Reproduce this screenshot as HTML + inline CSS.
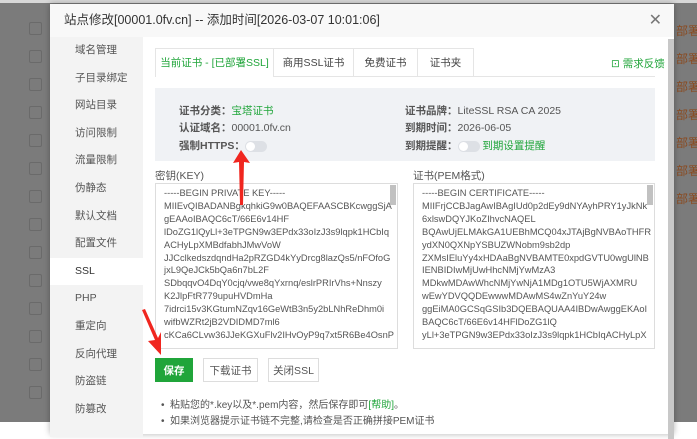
<!DOCTYPE html><html><head><meta charset="utf-8"><style>
body{margin:0;width:697px;height:422px;overflow:hidden;background:#fff;font-family:"Liberation Sans","Noto Sans CJK SC",sans-serif;position:relative}
.ov{position:absolute;left:0;top:0;width:697px;height:422px;background:#7b7b7b}
.topw{position:absolute;left:0;top:0;width:697px;height:3px;background:#d8d8d8}
.cb{position:absolute;left:29px;width:11px;height:11px;border:1px solid #6a6a6a;border-radius:2px}
.rt{position:absolute;left:676px;font-size:12px;color:#8a4a20;white-space:nowrap;width:40px}
.modal{position:absolute;left:50px;top:4px;width:624px;height:430px;background:#fff;box-shadow:0 0 6px rgba(0,0,0,.3)}
.hd{height:33px;background:#f8f8f8;font-size:12.5px;color:#333;line-height:33px;padding-left:14px}
.x{position:absolute;right:12px;top:6px;font-size:16px;color:#777;font-weight:normal}
.side{position:absolute;left:0;top:33px;width:93px;height:400px;background:#f3f3f3}
.side div{height:27.6px;line-height:27.6px;font-size:10.5px;color:#555;padding-left:25px}
.side .on{background:#fff;color:#333}
.sb{position:absolute;left:618px;top:35px;width:6px;height:400px;background:#c8c8c8}
.tabs{position:absolute;left:105px;top:44px;height:28px;border-bottom:1px solid #e5e5e5;width:500px}
.tab{position:absolute;top:0;height:28px;line-height:28px;font-size:10.5px;color:#444;text-align:center;border:1px solid #e5e5e5;border-bottom:none;box-sizing:border-box}
.info{position:absolute;left:105px;top:84px;width:500px;height:73px;background:#f0f2f5;font-size:10.5px;color:#555}
.info span.l{font-weight:bold;color:#555}
.g{color:#20a53a}
.row{position:absolute;white-space:nowrap}
.tog{display:inline-block;width:22px;height:11px;border-radius:6px;background:#dde0e5;vertical-align:middle;position:relative}
.tog:after{content:"";position:absolute;left:1px;top:1px;width:9px;height:9px;border-radius:50%;background:#fff}
.lab{position:absolute;font-size:10.5px;color:#555}
.ta{position:absolute;border:1px solid #ddd;font-size:9.3px;line-height:12.9px;color:#555;padding:3px 8px;box-sizing:border-box;overflow:hidden;white-space:nowrap}
.tsb{position:absolute;top:1px;right:1px;width:6px;height:20px;background:#c1c1c1}
.btn{position:absolute;top:354px;height:24px;line-height:24px;font-size:10.5px;text-align:center;border:1px solid #ddd;color:#555;box-sizing:border-box}
.bl{position:absolute;left:111px;font-size:10px;color:#555;white-space:nowrap}
</style></head><body>
<div class="ov"></div><div class="topw"></div>
<div class="cb" style="top:22px"></div><div class="cb" style="top:50px"></div><div class="cb" style="top:78px"></div><div class="cb" style="top:106px"></div><div class="cb" style="top:134px"></div><div class="cb" style="top:162px"></div><div class="cb" style="top:190px"></div><div class="cb" style="top:218px"></div><div class="cb" style="top:246px"></div><div class="cb" style="top:274px"></div><div class="cb" style="top:302px"></div><div class="cb" style="top:330px"></div><div class="cb" style="top:358px"></div><div class="cb" style="top:386px"></div>
<div class="rt" style="top:22px">部署</div><div class="rt" style="top:50px">部署</div><div class="rt" style="top:78px">部署</div><div class="rt" style="top:106px">部署</div><div class="rt" style="top:134px">部署</div><div class="rt" style="top:162px">部署</div><div class="rt" style="top:190px">部署</div>
<div class="modal">
<div class="hd">站点修改[00001.0fv.cn] -- 添加时间[2026-03-07 10:01:06]</div>
<div class="x">✕</div>
<div class="side"><div>域名管理</div><div>子目录绑定</div><div>网站目录</div><div>访问限制</div><div>流量限制</div><div>伪静态</div><div>默认文档</div><div>配置文件</div><div class="on">SSL</div><div>PHP</div><div>重定向</div><div>反向代理</div><div>防盗链</div><div>防篡改</div></div>
<div class="sb"></div>
<div class="tabs">
<div class="tab" style="left:0;width:119px;color:#20a53a;background:#fff;height:29px">当前证书 - [已部署SSL]</div>
<div class="tab" style="left:118px;width:81px">商用SSL证书</div>
<div class="tab" style="left:198px;width:65px">免费证书</div>
<div class="tab" style="left:262px;width:57px">证书夹</div>
</div>
<div class="row g" style="left:561px;top:52px;font-size:10.5px">⊡ 需求反馈</div>
<div class="info">
<div class="row" style="left:24px;top:15px"><span class="l">证书分类：</span><span class="g">宝塔证书</span></div>
<div class="row" style="left:24px;top:32px"><span class="l">认证域名：</span>00001.0fv.cn</div>
<div class="row" style="left:24px;top:50px"><span class="l">强制HTTPS：</span><span class="tog"></span></div>
<div class="row" style="left:250px;top:15px"><span class="l">证书品牌：</span>LiteSSL RSA CA 2025</div>
<div class="row" style="left:250px;top:32px"><span class="l">到期时间：</span>2026-06-05</div>
<div class="row" style="left:250px;top:50px"><span class="l">到期提醒：</span><span class="tog"></span> <span class="g">到期设置提醒</span></div>
</div>
<div class="lab" style="left:105px;top:164px">密钥(KEY)</div>
<div class="lab" style="left:363px;top:164px">证书(PEM格式)</div>
<div class="ta" style="left:105px;top:179px;width:243px;height:166px">-----BEGIN PRIVATE KEY-----<br>MIIEvQIBADANBgkqhkiG9w0BAQEFAASCBKcwggSjA<br>gEAAoIBAQC6cT/66E6v14HF<br>lDoZG1lQyLl+3eTPGN9w3EPdx33oIzJ3s9lqpk1HCbIq<br>ACHyLpXMBdfabhJMwVoW<br>JJCclkedszdqndHa2pRZGD4kYyDrcg8lazQs5/nFOfoG<br>jxL9QeJCk5bQa6n7bL2F<br>SDbqqvO4DqY0cjq/vwe8qYxrnq/eslrPRIrVhs+Nnszy<br>K2JlpFtR779upuHVDmHa<br>7idrci15v3KGtumNZqv16GeWtB3n5y2bLNhReDhm0i<br>wifbWZRt2jB2VDIDMD7ml6<br>cKCa6CLvw36JJeKGXuFlv2IHvOyP9q7xt5R6Be4OsnP<div class="tsb"></div></div>
<div class="ta" style="left:363px;top:179px;width:242px;height:166px">-----BEGIN CERTIFICATE-----<br>MIIFrjCCBJagAwIBAgIUd0p2dEy9dNYAyhPRY1yJkNk<br>6xlswDQYJKoZIhvcNAQEL<br>BQAwUjELMAkGA1UEBhMCQ04xJTAjBgNVBAoTHFR<br>ydXN0QXNpYSBUZWNobm9sb2dp<br>ZXMsIEluYy4xHDAaBgNVBAMTE0xpdGVTU0wgUlNB<br>IENBIDIwMjUwHhcNMjYwMzA3<br>MDkwMDAwWhcNMjYwNjA1MDg1OTU5WjAXMRU<br>wEwYDVQQDEwwwMDAwMS4wZnYuY24w<br>ggEiMA0GCSqGSIb3DQEBAQUAA4IBDwAwggEKAoI<br>BAQC6cT/66E6v14HFlDoZG1lQ<br>yLl+3eTPGN9w3EPdx33oIzJ3s9lqpk1HCbIqACHyLpX<div class="tsb"></div></div>
<div class="btn" style="left:105px;width:38px;background:#20a53a;color:#fff;border-color:#20a53a;font-weight:bold">保存</div>
<div class="btn" style="left:153px;width:55px">下载证书</div>
<div class="btn" style="left:218px;width:51px">关闭SSL</div>
<div class="bl" style="top:392px">•&nbsp;&nbsp;粘贴您的*.key以及*.pem内容，然后保存即可<span class="g">[帮助]</span>。</div>
<div class="bl" style="top:408px">•&nbsp;&nbsp;如果浏览器提示证书链不完整,请检查是否正确拼接PEM证书</div>
</div>
<svg style="position:absolute;left:0;top:0" width="697" height="422">
<polygon points="241,150 233,163 239,162 240,205 243,205 244,162 250,163" fill="#f0261f"/>
<polygon points="142,310 145,309 158,338 161,332 161,355 148,341 155,340" fill="#f0261f"/>
</svg>
</body></html>
